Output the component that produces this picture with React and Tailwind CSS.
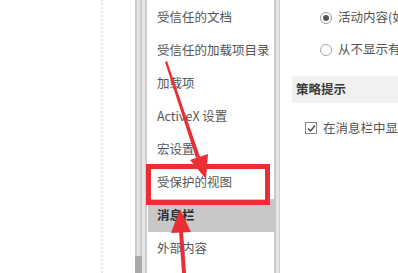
import React from "react";

const font = { fontFamily: '"Noto Sans CJK SC", "Noto Sans", sans-serif' };

function NavItem({ label, active }) {
  return (
    <div
      className={
        "h-[33px] flex items-center pl-[9px] whitespace-nowrap " +
        (active ? "bg-[#c8c8c8] text-[#2e2e2e] font-bold" : "text-[#555555]")
      }
    >
      {label}
    </div>
  );
}

function Arrows() {
  // annotation layer: red arrows and the box round 受保护的视图
  return (
    <svg
      className="absolute inset-0 pointer-events-none"
      width="398"
      height="273"
      viewBox="0 0 398 273"
    >
      <rect
        x="148.5"
        y="166.5"
        width="119"
        height="36"
        fill="none"
        stroke="#ea2e35"
        strokeWidth="5"
      />
      {/* arrow from 受信任的加载项目录 down to the box */}
      <polygon points="165,62 167,61 200,157 196,158" fill="#ea2e35" />
      <polygon points="206,179 190,160 208,154" fill="#ea2e35" />
      {/* arrow from the bottom up to 消息栏 */}
      <polygon points="182,273 186,273 183,231 179,231" fill="#ea2e35" />
      <polygon points="180,209 171,233 191,232" fill="#ea2e35" />
    </svg>
  );
}

export default function App() {
  const items = [
    "受信任的文档",
    "受信任的加载项目录",
    "加载项",
    "ActiveX 设置",
    "宏设置",
    "受保护的视图",
    "消息栏",
    "外部内容",
    "文件阻止设置",
  ];

  return (
    <div
      className="relative w-[398px] h-[273px] overflow-hidden bg-white flex text-[12.5px]"
      style={font}
    >
      {/* blank left margin with dotted guide */}
      <div className="w-[103px] shrink-0 border-r-[2px] border-dotted border-[#e6e6e6]" />
      <div className="w-[32px] shrink-0" />

      {/* dialog edge / scroll strip */}
      <div className="w-[13px] shrink-0 flex">
        <div className="w-[7px] flex flex-col">
          <div className="flex-1 flex">
            <div className="w-[2px] bg-[#cbcbcb]" />
            <div className="w-[3px] bg-[#e4e4e4]" />
            <div className="w-[2px] bg-[#cbcbcb]" />
          </div>
          <div className="h-[17px] bg-[#a9a9a9]" />
        </div>
        <div className="w-[3px] bg-[#e6e6e6]" />
        <div className="w-[2px] bg-[#cfcfcf]" />
        <div className="w-[1px] bg-white" />
      </div>

      {/* category list */}
      <div className="w-[126px] shrink-0 pt-[1px]">
        {items.map((it) => (
          <NavItem key={it} label={it} active={it === "消息栏"} />
        ))}
      </div>

      {/* panel border */}
      <div className="w-[6px] shrink-0 flex">
        <div className="w-[2px] bg-[#c9c9c9]" />
        <div className="w-[3px] bg-[#e6e6e6]" />
        <div className="w-[1px] bg-[#d2d2d2]" />
      </div>

      {/* settings pane */}
      <div className="flex-1 min-w-0 text-[#555555] whitespace-nowrap">
        <div className="h-[33px] flex items-center pl-[40px] gap-[6px] pt-[2px]">
          <span className="w-[12px] h-[12px] rounded-full border border-[#9a9a9a] flex items-center justify-center shrink-0">
            <span className="w-[6px] h-[6px] rounded-full bg-[#555555]" />
          </span>
          <span>活动内容(如 ActiveX 控件和宏)已被阻止时在所有应用程序中显示消息栏</span>
        </div>
        <div className="h-[33px] flex items-center pl-[40px] gap-[6px]">
          <span className="w-[12px] h-[12px] rounded-full border border-[#a8a8a8] shrink-0" />
          <span>从不显示有关被阻止内容的信息</span>
        </div>
        <div className="h-[10px]" />
        <div className="ml-[12px] h-[27px] bg-[#f1f1f1] flex items-center pl-[4px] text-[#3a3a3a] font-bold">
          策略提示
        </div>
        <div className="h-[50px] flex items-center pl-[25px] gap-[6px]">
          <span className="w-[12px] h-[12px] border border-[#8a8a8a] flex items-center justify-center shrink-0">
            <svg width="9" height="9" viewBox="0 0 9 9">
              <path d="M1 4.5 L3.5 7 L8 1.5" fill="none" stroke="#444" strokeWidth="1.3" />
            </svg>
          </span>
          <span>在消息栏中显示策略提示</span>
        </div>
      </div>

      <Arrows />
    </div>
  );
}
